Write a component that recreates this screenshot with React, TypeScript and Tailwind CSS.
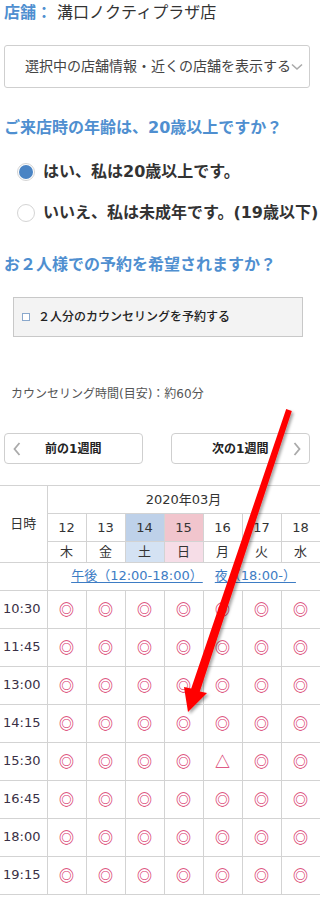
const font = "font-['DejaVu_Sans','Noto_Sans_CJK_JP',sans-serif]";

const days = [
  { d: "12", w: "木", dayBg: "", wBg: "" },
  { d: "13", w: "金", dayBg: "", wBg: "" },
  { d: "14", w: "土", dayBg: "bg-[#bed1e9]", wBg: "bg-[#d4e2f3]" },
  { d: "15", w: "日", dayBg: "bg-[#f1c5cd]", wBg: "bg-[#f6dde7]" },
  { d: "16", w: "月", dayBg: "", wBg: "" },
  { d: "17", w: "火", dayBg: "", wBg: "" },
  { d: "18", w: "水", dayBg: "", wBg: "" },
];

const times = ["10:30", "11:45", "13:00", "14:15", "15:30", "16:45", "18:00", "19:15"];

function Chevron({ dir }: { dir: "left" | "right" | "down" }) {
  if (dir === "down") {
    return (
      <svg width="12" height="8" viewBox="0 0 12 8" className="shrink-0">
        <path d="M1 1.5 L6 6 L11 1.5" fill="none" stroke="#aaa" strokeWidth="1.6" />
      </svg>
    );
  }
  return (
    <svg width="8" height="14" viewBox="0 0 8 14" className="shrink-0">
      <path
        d={dir === "left" ? "M6.5 1 L1.5 7 L6.5 13" : "M1.5 1 L6.5 7 L1.5 13"}
        fill="none"
        stroke="#aaa"
        strokeWidth="1.8"
      />
    </svg>
  );
}

function Radio({ checked, label }: { checked: boolean; label: string }) {
  return (
    <div className="flex items-center h-[24px] ml-[13px] gap-[8px]">
      <span className="shrink-0 w-[18px] h-[18px] rounded-full border border-[#d4d4d4] bg-white flex items-center justify-center">
        {checked && <span className="w-[14px] h-[14px] rounded-full bg-[#4a84c4]" />}
      </span>
      <span className="shrink-0 text-[16px] font-bold text-[#333] whitespace-nowrap">{label}</span>
    </div>
  );
}

export default function App() {
  const cell = "border border-[#d3d3d3] text-center p-0";
  return (
    <div className={`relative w-[320px] min-h-[897px] bg-white overflow-hidden text-[#333] ${font}`}>
      <div className="pl-[4px] pr-[10px]">
        <p className="h-[26px] leading-[26px] text-[16px] whitespace-nowrap">
          <span className="font-bold text-[#4f8fd0]">店舗：</span> 溝口ノクティプラザ店
        </p>

        <div className="mt-[19px] h-[43px] border border-[#cfcfcf] rounded-[3px] flex items-center pl-[20px] pr-[8px]">
          <span className="text-[14px] text-[#444] whitespace-nowrap">選択中の店舗情報・近くの店舗を表示する</span>
          <Chevron dir="down" />
        </div>

        <h2 className="mt-[28px] h-[24px] leading-[24px] text-[16px] font-bold text-[#4f8fd0] whitespace-nowrap">
          ご来店時の年齢は、20歳以上ですか？
        </h2>

        <div className="mt-[20px]">
          <Radio checked label="はい、私は20歳以上です。" />
        </div>
        <div className="mt-[17px]">
          <Radio checked={false} label="いいえ、私は未成年です。(19歳以下)" />
        </div>

        <h2 className="mt-[28px] h-[24px] leading-[24px] text-[16px] font-bold text-[#4f8fd0] whitespace-nowrap">
          お２人様での予約を希望されますか？
        </h2>

        <label className="mt-[20px] ml-[9px] w-[290px] h-[40px] border border-[#c8c8c8] bg-[#f3f3f3] flex items-center pl-[8px] gap-[8px]">
          <span className="w-[8px] h-[8px] border border-[#8aa8cc] bg-white" />
          <span className="text-[12px] font-medium text-[#222] whitespace-nowrap">２人分のカウンセリングを予約する</span>
        </label>

        <p className="mt-[48px] pl-[7px] h-[18px] leading-[18px] text-[12px] text-[#555] whitespace-nowrap">
          カウンセリング時間(目安)：約60分
        </p>

        <div className="mt-[30px] flex gap-[28px]">
          <button className="w-[139px] h-[31px] border border-[#cfcfcf] rounded-[4px] flex items-center px-[8px] bg-white">
            <Chevron dir="left" />
            <span className="flex-1 text-[12px] font-bold text-[#222] pr-[8px]">前の1週間</span>
          </button>
          <button className="w-[140px] h-[31px] border border-[#cfcfcf] rounded-[4px] flex items-center px-[8px] bg-white">
            <span className="flex-1 text-[12px] font-bold text-[#222] pl-[8px]">次の1週間</span>
            <Chevron dir="right" />
          </button>
        </div>
      </div>

      <table className="mt-[21px] w-[320px] table-fixed border-collapse text-[13px] text-[#333]">
        <colgroup>
          <col className="w-[47px]" />
          {days.map((d) => (
            <col key={d.d} className="w-[39px]" />
          ))}
        </colgroup>
        <tbody>
          <tr className="h-[28px]">
            <td rowSpan={3} className={`${cell} border-l-0`}>
              日時
            </td>
            <td colSpan={7} className={cell}>
              2020年03月
            </td>
          </tr>
          <tr className="h-[28px]">
            {days.map((d) => (
              <td key={d.d} className={`${cell} ${d.dayBg}`}>
                {d.d}
              </td>
            ))}
          </tr>
          <tr className="h-[20px]">
            {days.map((d) => (
              <td key={d.w} className={`${cell} ${d.wBg}`}>
                {d.w}
              </td>
            ))}
          </tr>
          <tr className="h-[28px]">
            <td className={`${cell} border-l-0`} />
            <td colSpan={7} className={cell}>
              <span className="inline-flex gap-[12px] text-[#3d7cc4] whitespace-nowrap">
                <a className="underline underline-offset-2">午後（12:00-18:00）</a>
                <a className="underline underline-offset-2">夜（18:00-）</a>
              </span>
            </td>
          </tr>
          {times.map((t) => (
            <tr key={t} className="h-[38px]">
              <td className={`${cell} border-l-0 text-left pl-[3px] text-[#3a3045]`}>{t}</td>
              {days.map((d) => (
                <td
                  key={d.d}
                  className={`${cell} text-[#d8346a] text-[15px] font-bold font-['Noto_Sans_CJK_JP',sans-serif]`}
                >
                  {t === "15:30" && d.d === "16" ? "△" : "◎"}
                </td>
              ))}
            </tr>
          ))}
        </tbody>
      </table>

      <svg
        className="absolute left-0 top-0 pointer-events-none"
        width="320"
        height="897"
        viewBox="0 0 320 897"
      >
        <defs>
          <filter id="sh" x="-50%" y="-10%" width="200%" height="120%">
            <feDropShadow dx="2" dy="2" stdDeviation="1.8" floodColor="#000" floodOpacity="0.35" />
          </filter>
        </defs>
        <polygon
          points="291.8,411 199.8,691.5 207,693 188,712 184,687 191.2,688.5 286.2,409"
          fill="#ff0000"
          filter="url(#sh)"
        />
      </svg>
    </div>
  );
}
